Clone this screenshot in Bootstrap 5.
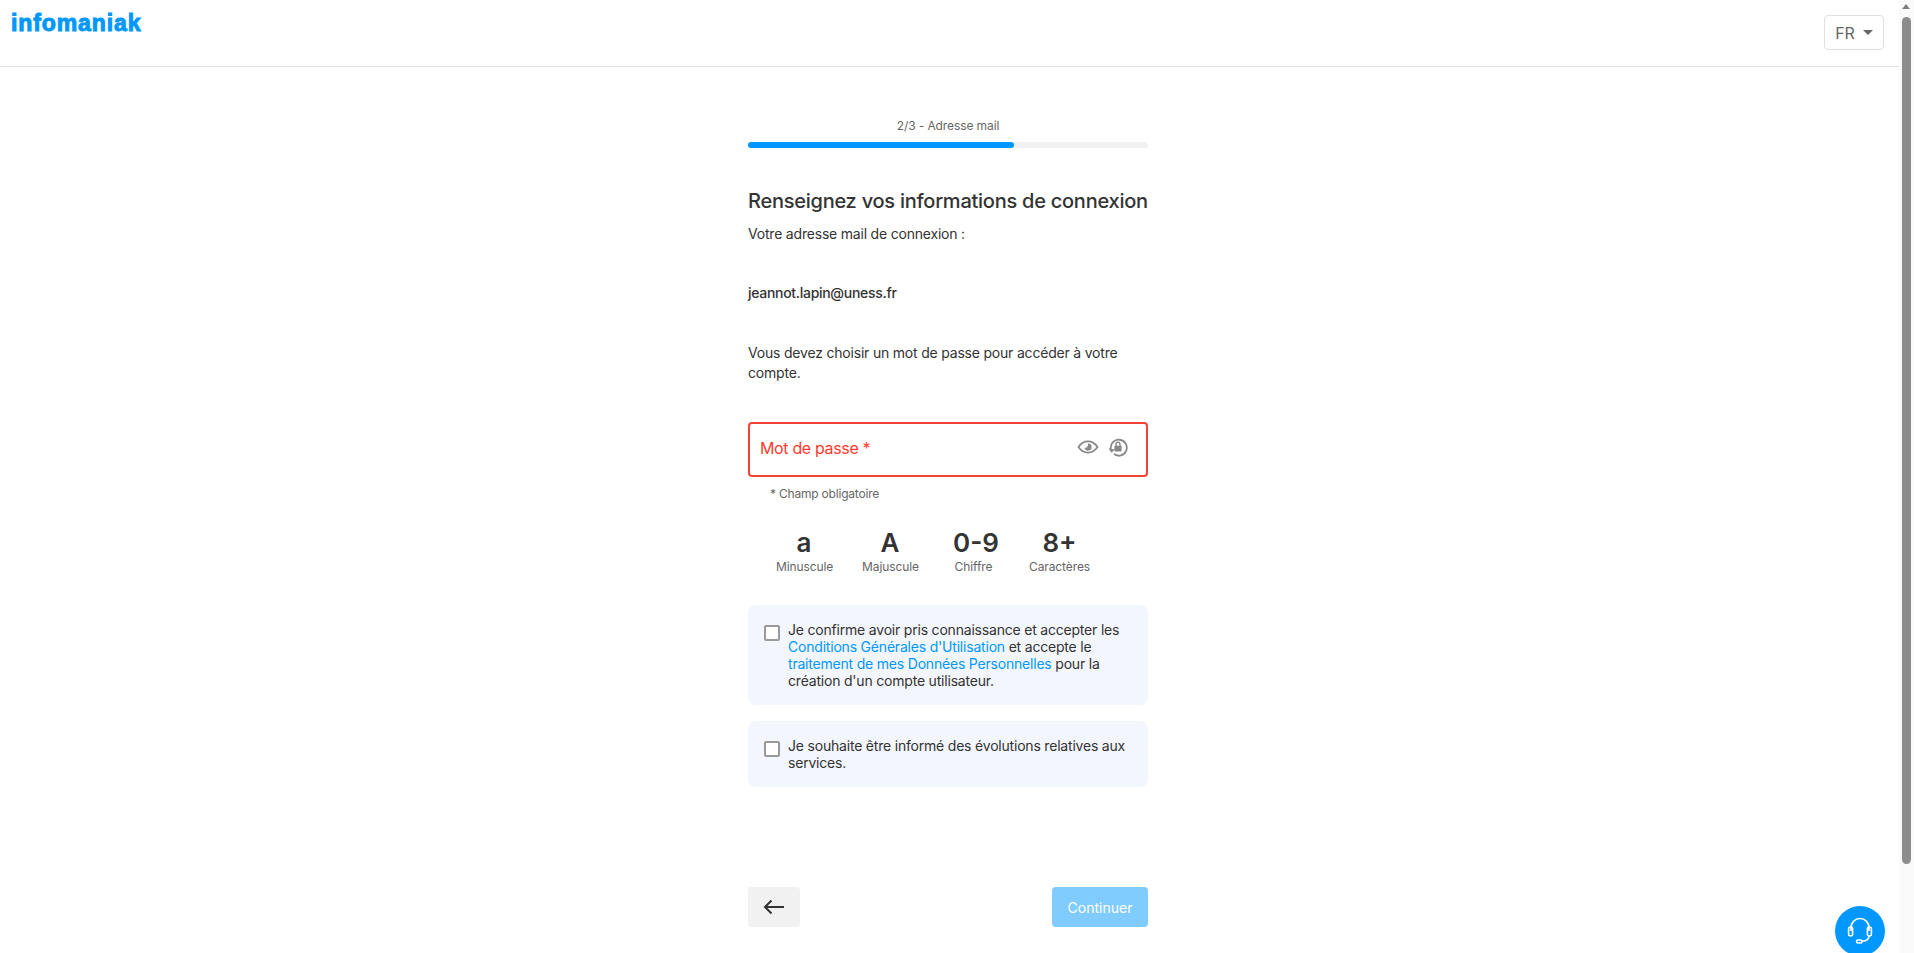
<!DOCTYPE html>
<html lang="fr">
<head>
  <meta charset="UTF-8" />
  <meta name="viewport" content="width=device-width, initial-scale=1.0"/>
  <title>Infomaniak - Inscription</title>
  <link href="https://cdn.jsdelivr.net/npm/bootstrap@5.3.0/dist/css/bootstrap.min.css" rel="stylesheet"/>
  <style>
    html, body { height: 100%; overflow: hidden; }
    body {
      font-family: Inter, "Liberation Sans", sans-serif;
      font-size: 14px;
      letter-spacing: -0.2px;
      color: #333;
      background: #fff;
    }

    .page-area { width: 1899px; height: 953px; overflow: hidden; }

    .top-bar { height: 67px; border-bottom: 1px solid #e0e0e0; padding: 0 15px 0 11px; }
    .brand-logo {
      font-family: "Liberation Sans", Arial, sans-serif;
      font-weight: 700;
      font-size: 23px;
      letter-spacing: 0.9px;
      line-height: 1;
      color: #0098ff;
      margin-top: 12px;
      -webkit-text-stroke: 1px #0098ff;
      text-decoration: none;
    }
    .lang-btn {
      width: 60px; height: 35px; margin-top: 15px;
      border: 1px solid #e0e0e0; border-radius: 4px;
      background: #fff; color: #666; font-size: 16px;
    }
    .lang-caret { width: 0; height: 0; border: 5px solid transparent; border-top: 5px solid #666; border-bottom: 0; }

    .form-col { width: 400px; margin-left: 748px; }

    .step-label { margin-top: 50px; font-size: 12px; letter-spacing: -0.1px; line-height: 18px; color: #666; }
    .step-track { height: 6px; margin-top: 7px; background: #f1f1f1; border-radius: 3px; }
    .step-fill { height: 6px; width: 66.5%; background: #0098ff; border-radius: 3px; }

    .form-title { margin: 40px 0 0; font-size: 20px; letter-spacing: -0.25px; font-weight: 500; line-height: 26px; color: #333; white-space: nowrap; }
    .intro-text { margin: 9px 0 0; line-height: 21px; }
    .form-mail { margin: 38px 0 0; line-height: 21px; font-weight: 500; letter-spacing: -0.3px; }
    .form-hint { margin: 40px 0 0; line-height: 20px; }

    .pass-box {
      height: 55px; margin-top: 39px; padding: 0 18px 0 10px;
      border: 2px solid #f44336; border-radius: 4px;
    }
    .pass-label { font-size: 16px; letter-spacing: -0.35px; color: #ff3b30; margin-bottom: 4px; }
    .pass-icons { margin-bottom: 6px; gap: 9px; }
    .pass-note { margin: 8px 0 0 22px; font-size: 12px; letter-spacing: -0.2px; line-height: 18px; color: #666; }

    .rule-row { margin: 24px 0 0 28px; }
    .rule-item { width: 56px; }
    .rule-item + .rule-item { margin-left: 30px; }
    .rule-big { font-size: 26px; letter-spacing: 0; line-height: 31px; font-weight: 600; color: #333; white-space: nowrap; }
    .rule-small { font-size: 12px; letter-spacing: -0.1px; line-height: 18px; color: #666; white-space: nowrap; }
    .rule-item.rule-third { width: 41px; margin-left: 35px; }
    .rule-item.rule-fourth { width: 61px; margin-left: 35px; }

    .consent-box { background: #f4f6fd; border-radius: 8px; padding: 16px; line-height: 17px; gap: 8px; }
    .consent-one { margin-top: 29px; }
    .consent-two { margin-top: 16px; }
    .consent-tick { width: 16px; height: 16px; flex: none; margin-top: 4px; border: 2px solid #999; border-radius: 2px; background: #fff; }
    .consent-box a { color: #0098ff; text-decoration: none; }

    .action-row { margin-top: 100px; }
    .back-btn { width: 52px; height: 40px; background: #f1f1f1; border-radius: 4px; border: 0; }
    .next-btn { width: 96px; height: 40px; background: #80cbff; color: #fff; border-radius: 4px; border: 0; font-size: 14px; }

    /* the window scrollbar and the help bubble sit over the page */
    .fake-scroll { position: fixed; top: 0; right: 0; width: 15px; height: 953px; background: #fafafa; }
    .fake-arrow { position: absolute; top: 4px; left: 3px; width: 0; height: 0; border: 4.5px solid transparent; border-bottom: 5px solid #7f7f7f; border-top: 0; }
    .fake-thumb { position: absolute; top: 17px; left: 3px; width: 9px; height: 847px; background: #8c8c8c; border-radius: 5px; }
    .help-bubble { position: fixed; left: 1835px; top: 906px; width: 50px; height: 50px; border-radius: 50%; background: #0098ff; }
  </style>
</head>
<body>
  <div class="page-area">
    <header class="top-bar d-flex justify-content-between align-items-start">
      <a class="brand-logo" href="#">infomaniak</a>
      <button type="button" class="lang-btn d-flex align-items-center justify-content-center gap-2 p-0">
        FR <span class="lang-caret"></span>
      </button>
    </header>

    <main class="form-col">
      <div class="step-label text-center">2/3 - Adresse mail</div>
      <div class="step-track"><div class="step-fill"></div></div>

      <h1 class="form-title">Renseignez vos informations de connexion</h1>
      <p class="intro-text">Votre adresse mail de connexion :</p>
      <p class="form-mail">jeannot.lapin@uness.fr</p>
      <p class="form-hint">Vous devez choisir un mot de passe pour accéder à votre compte.</p>

      <div class="pass-box d-flex align-items-center justify-content-between">
        <span class="pass-label">Mot de passe *</span>
        <span class="pass-icons d-flex align-items-center">
          <svg width="22" height="22" viewBox="0 0 22 22" fill="none" stroke="#888" stroke-width="1.7">
            <path d="M1.5 11C4 7.2 7.3 5.4 11 5.4S18 7.2 20.5 11C18 14.8 14.7 16.6 11 16.6S4 14.8 1.5 11Z"/>
            <path d="M11 7.4a3.6 3.6 0 1 1-3.5 4.4c1.9.5 3.9-1.6 3.5-4.4Z" fill="#888" stroke="none"/>
          </svg>
          <svg width="20" height="20" viewBox="0 0 20 20" fill="none" stroke="#888" stroke-width="1.8">
            <path d="M2.9 12A8 8 0 1 1 6 17.1 8 8 0 0 0 10.400 18.500"/>
            <path d="M0.400 11.200 3.400 15.800 6.900 12.400Z" fill="#888" stroke="none"/>
            <rect x="6.4" y="8.800" width="7.200" height="5.600" rx="0.8" fill="#888" stroke="none"/>
            <path d="M8 9V7.200a2 2 0 0 1 4 0V9" stroke-width="1.4"/>
          </svg>
        </span>
      </div>
      <div class="pass-note">* Champ obligatoire</div>

      <div class="rule-row d-flex">
        <div class="rule-item text-center"><div class="rule-big">a</div><div class="rule-small">Minuscule</div></div>
        <div class="rule-item text-center"><div class="rule-big">A</div><div class="rule-small">Majuscule</div></div>
        <div class="rule-item rule-third text-center"><div class="rule-big">0-9</div><div class="rule-small">Chiffre</div></div>
        <div class="rule-item rule-fourth text-center"><div class="rule-big">8+</div><div class="rule-small">Caractères</div></div>
      </div>

      <div class="consent-box consent-one d-flex">
        <span class="consent-tick"></span>
        <span>Je confirme avoir pris connaissance et accepter les <a href="#">Conditions Générales d'Utilisation</a> et accepte le <a href="#">traitement de mes Données Personnelles</a> pour la création d'un compte utilisateur.</span>
      </div>
      <div class="consent-box consent-two d-flex">
        <span class="consent-tick"></span>
        <span>Je souhaite être informé des évolutions relatives aux services.</span>
      </div>

      <div class="action-row d-flex justify-content-between">
        <button type="button" class="back-btn d-flex align-items-center justify-content-center p-0">
          <svg width="22" height="16" viewBox="0 0 22 16" fill="none" stroke="#333" stroke-width="2"><path d="M21 8H2M8.5 1.5 2 8l6.500 6.500"/></svg>
        </button>
        <button type="button" class="next-btn p-0">Continuer</button>
      </div>
    </main>
  </div>

  <div class="fake-scroll"><span class="fake-arrow"></span><span class="fake-thumb"></span></div>
  <div class="help-bubble d-flex align-items-center justify-content-center">
    <svg width="28" height="30" viewBox="0 0 28 30" fill="none" stroke="#fff" stroke-width="1.6">
      <path d="M5 15V11.5a9 9 0 0 1 18 0V15"/>
      <rect x="2.6" y="11" width="4" height="9" rx="2"/>
      <rect x="21.4" y="11" width="4" height="9" rx="2"/>
      <path d="M23 20c0 3.500-2.500 5-7 5.300"/>
      <rect x="10.500" y="24" width="5.500" height="3" rx="1.500"/>
    </svg>
  </div>
</body>
</html>
